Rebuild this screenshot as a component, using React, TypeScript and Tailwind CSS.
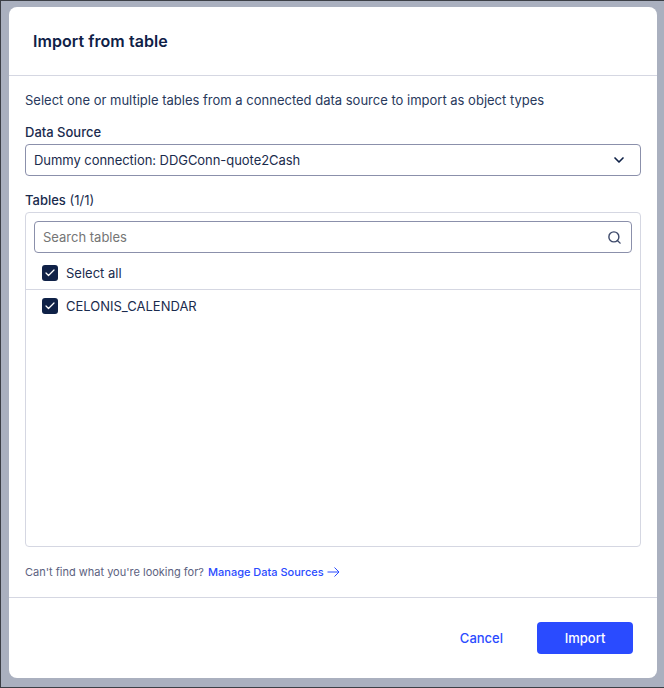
import React from 'react';
import { ChevronDown, Search, Check } from 'lucide-react';

const CheckRow = ({ label }: { label: string }) => (
  <div className="flex items-center gap-2 h-4">
    <span className="w-4 h-4 rounded-[3px] bg-[#0f2147] flex items-center justify-center text-white">
      <Check className="w-3 h-3" strokeWidth={2.5} />
    </span>
    <span className="text-[13px] leading-4 text-[#1a2b4d]">{label}</span>
  </div>
);

export default function App() {
  return (
    <div className="w-[664px] h-[688px] bg-[#aab0bf] border-l border-t border-b border-[#3c3f46] pl-2 pt-[6px] font-['Inter',sans-serif] overflow-hidden">
      <div className="w-[648px] h-[671px] bg-white rounded-lg flex flex-col">
        {/* Header */}
        <div className="h-[69px] shrink-0 border-b border-[#d5d7e2] flex items-center px-6">
          <h1 className="text-base font-semibold tracking-[0.05px] text-[#0f2147]">Import from table</h1>
        </div>

        {/* Body */}
        <div className="flex-1 flex flex-col px-4 pt-4">
          <p className="text-[13px] leading-4 text-[#28395c]">
            Select one or multiple tables from a connected data source to import as object types
          </p>

          <label className="mt-4 text-[13px] leading-4 font-medium text-[#1a2b4d]">Data Source</label>
          <div className="mt-1 h-8 border border-[#8b90ab] rounded flex items-center justify-between pl-2 pr-[13px]">
            <span className="pt-px text-[13px] tracking-[-0.05px] text-[#1a2b4d]">Dummy connection: DDGConn-quote2Cash</span>
            <ChevronDown className="w-4 h-4 text-[#0f2147]" strokeWidth={2.5} />
          </div>

          <label className="mt-4 text-[13px] leading-4 text-[#1a2b4d]">
            <span className="font-medium">Tables</span> (1/1)
          </label>
          <div className="mt-1 h-[335px] border border-[#d5d7e2] rounded">
            <div className="px-2 pt-2">
              <div className="h-8 border border-[#8b90ab] rounded flex items-center justify-between pl-2 pr-[9px]">
                <span className="pt-px text-[13px] text-[#757575]">Search tables</span>
                <Search className="w-[15px] h-[15px] text-[#3e4a6b]" strokeWidth={2.25} />
              </div>
            </div>
            <div className="h-[37px] flex items-center pl-4 pt-1 border-b border-[#d5d7e2]">
              <CheckRow label="Select all" />
            </div>
            <div className="flex items-center pl-4 pt-2">
              <CheckRow label="CELONIS_CALENDAR" />
            </div>
          </div>

          <div className="mt-[17px] flex items-center text-[11px] leading-4">
            <span className="text-[#5c6280]">Can't find what you're looking for?</span>
            <a className="ml-1 text-[#2a4bff] font-medium flex items-center gap-[3px]">
              Manage Data Sources
              <svg width="13" height="14" viewBox="0 0 13 14" fill="none" stroke="currentColor" strokeWidth="1">
                <path d="M0.5 7H12M7.5 2.5L12 7L7.5 11.5" />
              </svg>
            </a>
          </div>
        </div>

        {/* Footer */}
        <div className="h-[81px] shrink-0 border-t border-[#d5d7e2] flex items-start justify-end pt-6 pr-6">
          <button className="h-8 pt-px text-[13px] font-medium text-[#2a4bff] mr-[34px]">Cancel</button>
          <button className="w-24 h-8 pt-px rounded bg-[#2a4bff] text-[13px] font-medium text-white">Import</button>
        </div>
      </div>
    </div>
  );
}
